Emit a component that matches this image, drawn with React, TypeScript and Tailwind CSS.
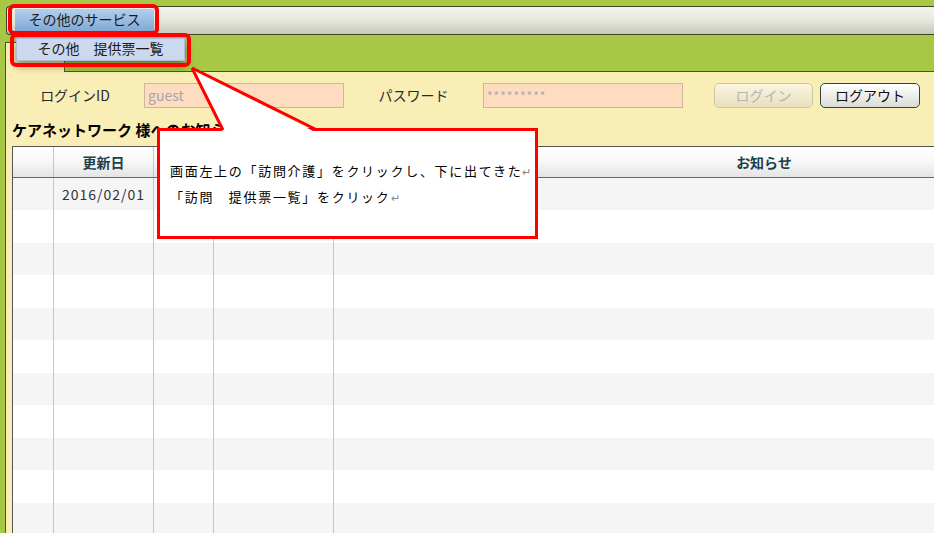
export default function App() {
  const rows = Array.from({ length: 11 }, (_, i) => i)
  const font = { fontFamily: '"Noto Sans CJK JP", "Noto Sans", sans-serif' }

  return (
    <div className="relative w-[934px] h-[533px] overflow-hidden bg-[#a6c844] text-[14px] text-[#222]" style={font}>
      {/* menu bar */}
      <div className="pt-[6px] pl-[6px]">
        <div className="h-[29px] border-y border-l border-[#3f4426] rounded-l-[4px] bg-gradient-to-b from-[#f4f5ee] via-[#e6e8dc] to-[#c6cab8] flex items-start">
          <div className="ml-[8px] mt-[2px] w-[139px] h-[23px] flex items-center justify-center pb-[4px] bg-gradient-to-b from-[#b3cfee] to-[#7ea7d3] text-[#1a1a1a] leading-none">
            その他のサービス
          </div>
        </div>
      </div>

      {/* tab strip */}
      <div className="h-[36px] pl-[5px] flex items-end">
        <div className="relative z-10 -mb-px w-[60px] h-[30px] bg-[#f9eeb6] border-x border-t border-[#4f5231]" />
      </div>

      {/* panel */}
      <div className="ml-[5px] h-[462px] bg-[#f9eeb6] border-l border-t border-[#4f5231] pl-[6px] overflow-hidden">
        <div className="flex items-center h-[25px] mt-[11px]">
          <div className="w-[138px] text-center text-[#2a2a2a] -ml-[6px]">ログインID</div>
          <div className="w-[200px] h-[25px] bg-[#fddcc0] border border-[#c9b79c] flex items-center pl-[3px] text-[#a6a6a6]">guest</div>
          <div className="w-[139px] text-center text-[#2a2a2a]">パスワード</div>
          <div className="w-[200px] h-[25px] bg-[#fddcc0] border border-[#c9b79c] flex items-center pl-[3px] text-[#aaa] text-[12px] tracking-[1px]">*********</div>
          <div className="ml-[31px] w-[99px] h-[25px] rounded-[5px] border border-[#cfc6a6] bg-gradient-to-b from-[#fbf5df] to-[#e9e0bf] flex items-center justify-center text-[#b5b5b5]">ログイン</div>
          <div className="ml-[7px] w-[100px] h-[25px] rounded-[5px] border border-[#3d3d3d] bg-gradient-to-b from-[#ffffff] to-[#dcdcd6] flex items-center justify-center text-[#111]">ログアウト</div>
        </div>

        <div className="mt-[12px] h-[20px] flex items-center font-bold text-[15px] text-black">ケアネットワーク 様へのお知らせ</div>

        <div className="mt-[6px] w-[1200px] border-l border-t border-[#555]">
          <div className="grid grid-cols-[41px_100px_60px_120px_860px] h-[31px] border-b border-[#666] bg-gradient-to-b from-[#ffffff] via-[#f7f7f7] to-[#e4e4e4] font-bold text-[#1c3f4c]">
            <div className="border-r border-[#c6c6c6]" />
            <div className="border-r border-[#c6c6c6] flex items-center justify-center">更新日</div>
            <div className="border-r border-[#c6c6c6]" />
            <div className="border-r border-[#c6c6c6]" />
            <div className="flex items-center justify-center">お知らせ</div>
          </div>
          {rows.map((i) => (
            <div
              key={i}
              className={`grid grid-cols-[41px_100px_60px_120px_860px] ${i % 2 === 0 ? "h-[32px] bg-[#f5f5f5]" : "h-[33px] bg-white"}`}
            >
              <div className="border-r border-[#c6c6c6]" />
              <div className="border-r border-[#c6c6c6] flex items-center justify-center text-[#333] tracking-[1px]">{i === 0 ? "2016/02/01" : ""}</div>
              <div className="border-r border-[#c6c6c6]" />
              <div className="border-r border-[#c6c6c6]" />
              <div />
            </div>
          ))}
        </div>
      </div>

      {/* dropdown menu */}
      <div className="absolute z-20 left-[16px] top-[38px] w-[169px] h-[23px] pb-[3px] bg-[#cbd8ee] border border-[#aebbd3] shadow-[0_5px_8px_rgba(60,60,20,0.55)] flex items-center justify-center text-[#1a1a1a] leading-none">
        その他　提供票一覧
      </div>

      {/* red highlights */}
      <div className="absolute z-20 left-[8px] top-[4px] w-[151px] h-[31px] border-[4px] border-[#ff0000] rounded-[6px]" />
      <div className="absolute z-20 left-[10px] top-[33px] w-[181px] h-[34px] border-[4px] border-[#ff0000] rounded-[6px]" />

      {/* callout */}
      <div className="absolute z-20 left-[157px] top-[128px] w-[381px] h-[111px] bg-white border-[3px] border-[#ff0000] pl-[10px] pt-[27px] text-[13px] leading-[25px] tracking-[1.7px] text-black whitespace-nowrap">
        <div>画面左上の「訪問介護」をクリックし、下に出てきた<span className="text-[#888] text-[11px] tracking-normal">↵</span></div>
        <div>「訪問　提供票一覧」をクリック<span className="text-[#888] text-[11px] tracking-normal">↵</span></div>
      </div>
      <svg className="absolute z-20 left-0 top-0" width="934" height="533" viewBox="0 0 934 533" fill="none">
        <polygon points="192,69 223,132 315,132" fill="#fff" />
        <line x1="192" y1="68" x2="223" y2="130" stroke="#ff0000" strokeWidth="3" />
        <line x1="192" y1="68" x2="317" y2="130" stroke="#ff0000" strokeWidth="3" />
      </svg>
    </div>
  )
}
